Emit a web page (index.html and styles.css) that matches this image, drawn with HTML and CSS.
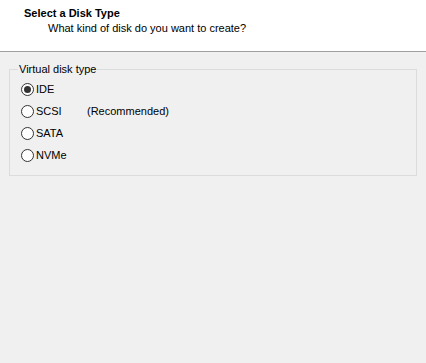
FILE: index.html
```html
<!DOCTYPE html>
<html>
<head>
<meta charset="utf-8">
<link rel="stylesheet" href="styles.css">
</head>
<body>
<div class="header">
  <div class="title">Select a Disk Type</div>
  <div class="subtitle">What kind of disk do you want to create?</div>
</div>
<div class="content">
  <fieldset class="group">
    <legend>Virtual disk type</legend>
    <div class="row"><span class="radio checked"></span><span class="label">IDE</span></div>
    <div class="row"><span class="radio"></span><span class="label">SCSI</span><span class="note">(Recommended)</span></div>
    <div class="row"><span class="radio"></span><span class="label">SATA</span></div>
    <div class="row"><span class="radio"></span><span class="label">NVMe</span></div>
  </fieldset>
</div>
</body>
</html>
```
FILE: styles.css
```css
html, body { margin: 0; padding: 0; }
body {
  width: 426px; height: 363px; overflow: hidden;
  background: #f0f0f0;
  font-family: "Liberation Sans", Arial, sans-serif;
  font-size: 11px;
  color: #000;
}
.header {
  background: #fff;
  border-bottom: 1px solid #a0a0a0;
  box-sizing: border-box;
  height: 52px;
  padding: 6px 0 0 24px;
}
.title { font-weight: bold; line-height: 15px; }
.subtitle { padding-left: 24px; line-height: 15px; }
.content { padding: 11px 9px 0 9px; }
.group {
  margin: 0;
  width: 408px;
  box-sizing: border-box;
  height: 113px;
  border: 1px solid #dcdcdc;
  padding: 2px 0 0 11px;
}
.group legend { padding: 0 1px; margin-left: -3px; line-height: 13px; }
.row { display: flex; align-items: center; height: 22px; }
.radio {
  width: 13px; height: 13px; box-sizing: border-box;
  border: 1px solid #333; border-radius: 50%;
  background: #fff; position: relative; margin-right: 2px;
}
.radio.checked::after {
  content: ""; position: absolute; left: 2px; top: 2px;
  width: 7px; height: 7px; border-radius: 50%; background: #333;
}
.label { width: 51px; }
```
